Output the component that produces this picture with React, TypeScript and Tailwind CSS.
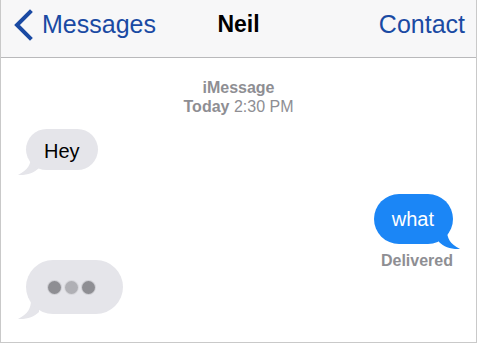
import React from "react"

const font = { fontFamily: '"Liberation Sans", Arial, sans-serif' }

function Tail({ side, color }: { side: "left" | "right"; color: string }) {
  // little curled tail at the bottom corner of a bubble
  const left = side === "left"
  return (
    <svg
      width="22"
      height="20"
      viewBox="0 0 22 20"
      className={`absolute bottom-[-6px] ${left ? "left-[-9px]" : "right-[-8px] -scale-x-100"}`}
    >
      <path d="M14 0 C14 8 11 14 1 19 C10 19.5 17 17 22 12 L22 0 Z" fill={color} />
    </svg>
  )
}

export default function App() {
  return (
    <div className="w-[480px] h-[347px] bg-white" style={font}>
      <div className="w-[477px] h-[343px] border-l border-r border-b border-[#c9c9c9] flex flex-col overflow-hidden">
        {/* Nav bar */}
        <div className="h-[58px] bg-[#f7f7f8] border-b border-[#b9b9bb]">
          <div className="h-[49px] grid grid-cols-[1fr_auto_1fr] items-center">
            <div className="flex items-center">
              <svg width="20" height="32" viewBox="0 0 20 32" className="ml-[12px]">
                <path d="M17 3 L4 16 L17 29" fill="none" stroke="#1a4aa3" strokeWidth="4" strokeLinecap="square" />
              </svg>
              <span className="ml-[9px] text-[25px] leading-[25px] text-[#1a4aa3]">Messages</span>
            </div>
            <div className="text-[23px] leading-[25px] font-bold text-black">Neil</div>
            <div className="flex justify-end pr-[11px]">
              <span className="text-[25px] leading-[25px] text-[#1a4aa3]">Contact</span>
            </div>
          </div>
        </div>

        {/* Conversation */}
        <div className="flex-1 flex flex-col">
          <div className="pt-[20px] text-center text-[16px] leading-[19px] text-[#8e8e93]">
            <div className="font-bold">iMessage</div>
            <div>
              <span className="font-bold">Today</span> 2:30 PM
            </div>
          </div>

          <div className="mt-[13px] ml-[25px] self-start relative">
            <Tail side="left" color="#e5e5ea" />
            <div className="relative h-[41px] px-[18px] pt-[3px] rounded-[21px] bg-[#e5e5ea] flex items-center text-[20px] text-black">
              Hey
            </div>
          </div>

          <div className="mt-[24px] mr-[23px] self-end relative">
            <Tail side="right" color="#1b86f6" />
            <div className="relative h-[50px] pl-[18px] pr-[19px] rounded-[25px] bg-[#1b86f6] flex items-center text-[20px] text-white">
              what
            </div>
          </div>
          <div className="mt-[9px] mr-[23px] self-end text-[16px] leading-[15px] font-bold text-[#8e8e93]">
            Delivered
          </div>

          <div className="-mt-[8px] ml-[25px] self-start relative">
            <Tail side="left" color="#e5e5ea" />
            <div className="relative h-[54px] w-[97px] pl-[22px] rounded-[27px] bg-[#e5e5ea] flex items-center gap-[4px]">
              <span className="w-[13px] h-[13px] rounded-full bg-[#8e8e93] ring-1 ring-[#d0d0d5]" />
              <span className="w-[13px] h-[13px] rounded-full bg-[#b0b0b5] ring-1 ring-[#d8d8dc]" />
              <span className="w-[13px] h-[13px] rounded-full bg-[#8e8e93] ring-1 ring-[#d0d0d5]" />
            </div>
          </div>
        </div>
      </div>
    </div>
  )
}
